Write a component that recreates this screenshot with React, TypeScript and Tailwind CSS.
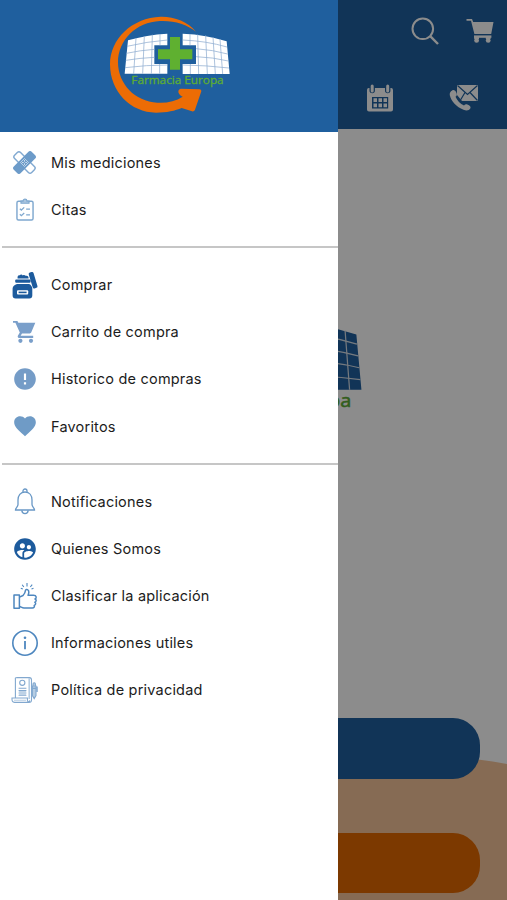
import type { ReactNode } from 'react'
import { MdError, MdFavorite, MdSupervisedUserCircle } from 'react-icons/md'

type Item = { label: string; icon: ReactNode }

// ── Logo ────────────────────────────────────────────────────────────────────
function Logo({ className, panel, line }: { className: string; panel: string; line: string }) {
  return (
    <svg viewBox="0 0 420 360" className={className} fill="none">
      <path
        d="M288 80C264 50 222 34 182 35C96 38 30 102 30 178C30 260 92 323 168 323C200 323 226 317 245 309L276 319Q283 320 285 314L304 259Q305 253 298 253L242 251C232 253 232 268 248 275C226 289 200 295 172 293C104 290 54 236 54 172C54 106 108 51 180 48C222 46 260 58 288 80Z"
        fill="#ec6c05"
      />
      <path d="M84 106Q140 89 202 86V121H163V177H202V206H74Z" fill={panel} />
      <path d="M248 86Q320 89 380 109L389 207H248V177H288V121H248Z" fill={panel} />
      <g stroke={line} strokeWidth="2.2">
        <path d="M108 99L101 206M133 93L128 206M157 89L154 206M180 87V121M179 177V206" />
        <path d="M81 124Q140 110 202 105M79 145Q120 136 163 133M77 166Q120 159 163 157M75 188Q140 180 202 180" />
        <path d="M270 87V121M271 177V207M293 88L296 207M317 91L322 207M339 96L346 207M360 102L368 207" />
        <path d="M248 105Q320 108 381 126M288 131Q340 135 383 147M288 155Q340 157 385 168M248 180Q320 181 387 189" />
      </g>
      <path d="M210 96H240V133H277V163H240V194H210V163H174V133H210Z" fill="#5fb030" />
      <text
        x="94"
        y="238"
        textLength="277"
        lengthAdjust="spacingAndGlyphs"
        fontSize="33"
        fontFamily="'Open Sans', 'Noto Sans', sans-serif"
        fill="#5cab35"
        stroke="#5cab35"
        strokeWidth="1"
      >
        Farmacia Europa
      </text>
    </svg>
  )
}

// ── Top bar icons ───────────────────────────────────────────────────────────
function SearchIcon() {
  return (
    <svg viewBox="0 0 28 28" className="size-7" fill="none" stroke="white" strokeWidth="2">
      <circle cx="11.8" cy="11.8" r="10.3" />
      <path d="M19.2 19.2L27 27" strokeWidth="2.4" />
    </svg>
  )
}

function CartIcon() {
  return (
    <svg viewBox="0 0 28 26" className="h-[26px] w-7" fill="white">
      <path d="M0.5 1H6L7.2 4H27.5L25.2 16H8.4L5 2.8H0.5Z" />
      <path d="M8 17.4H25.4V19.8H8Z" />
      <path d="M8.2 19H13V21H8.2ZM19.8 19H24.6V21H19.8Z" />
      <circle cx="10.6" cy="22.4" r="2.4" />
      <circle cx="22.2" cy="22.4" r="2.4" />
    </svg>
  )
}

function CalendarIcon() {
  return (
    <svg viewBox="0 0 28 28" className="size-7" fill="white">
      <path
        fillRule="evenodd"
        d="M2.8 4H3.5V6.5A2.6 2.6 0 0 0 8.9 6.5V4H19V6.5A2.6 2.6 0 0 0 24.4 6.5V4H25.2A2 2 0 0 1 27 6V25.5A2 2 0 0 1 25 27.5H3A2 2 0 0 1 1 25.5V6A2 2 0 0 1 2.8 4ZM6 13V24.5H22.2V13Z"
      />
      <rect x="4.7" y="0.5" width="3" height="8" rx="1.5" />
      <rect x="20.2" y="0.5" width="3" height="8" rx="1.5" />
      <path d="M7.5 14.3H11V18H7.5ZM12.5 14.3H16V18H12.5ZM17.5 14.3H21V18H17.5ZM7.5 19.5H11V23.2H7.5ZM12.5 19.5H16V23.2H12.5ZM17.5 19.5H21V23.2H17.5Z" />
    </svg>
  )
}

function ContactIcon() {
  return (
    <svg viewBox="0 0 30 28" className="h-7 w-[30px]" fill="white">
      <path d="M8 1H29V17H13L8 11Z" />
      <path d="M8.5 1.5L18.5 10.5L28.5 1.5M11.5 16L16 8.5M28.5 16.5L21 8.5" fill="none" stroke="#1f5f9e" strokeWidth="1.2" />
      <path d="M3.2 6.4C4.8 5.4 6.6 6.8 7.6 9.2C8.3 11 7.5 12 6.5 12.7C8.3 16.8 11.2 19.6 15 21.4C16 20.4 17 19.8 18.4 20.5C20.8 21.4 22.3 23 21.3 24.5C20 26.7 17.3 27 14.5 25.7C7.5 23 2.2 17.4 .8 11.2C.4 9 1.4 7.4 3.2 6.4Z" />
    </svg>
  )
}

// ── Menu icons ──────────────────────────────────────────────────────────────
function BandageIcon() {
  return (
    <svg viewBox="0 0 24 24" className="size-[23px]" fill="none">
      <rect x="-0.6" y="7.6" width="25.2" height="8.8" rx="2.4" transform="rotate(45 12 12)" stroke="#81a9d1" strokeWidth="1.5" />
      <rect x="-1.2" y="7" width="26.4" height="10" rx="2.4" transform="rotate(-45 12 12)" fill="#6c9bc9" />
      <path d="M12 7.8L16.2 12L12 16.2L7.8 12Z" stroke="#c7daec" strokeWidth="0.9" />
      <path d="M12 9.6V11M12 13V14.4M9.6 12H11M13 12H14.4" stroke="#e4eef7" />
    </svg>
  )
}

function ClipboardIcon() {
  return (
    <svg viewBox="0 0 20 24" className="h-[23px] w-5" fill="none" stroke="#7fa8cf" strokeWidth="1.5">
      <rect x="1.6" y="3.4" width="16.8" height="19.6" rx="1.6" />
      <path d="M5.8 5.5V3.2H8A2 2 0 0 1 12 3.2H14.2V5.5Z" fill="#a8c4df" strokeWidth="1.2" />
      <path d="M4.6 11.2L6.2 12.6L9.2 9.8M11.2 11.7H15.2M4.6 17L6.2 18.4L9.2 15.6M11.2 17.5H15.2" strokeWidth="1.3" />
    </svg>
  )
}

function JarIcon() {
  return (
    <svg viewBox="0 0 28 28" className="size-7" fill="#1d5b9d">
      <rect x="4.2" y="8.6" width="15.4" height="3.2" rx="1" />
      <path d="M6.6 7.6C6.4 5.4 6.8 3.8 8.8 4.2C9.6 3.2 11 3.4 11.8 4.4C13 3.6 14 4.2 14.6 4.8C16.6 4.2 17.8 5.4 17.6 7.6Z" />
      <rect x="19.6" y="0.9" width="5" height="16.6" rx="1.6" transform="rotate(-17 22.1 9.2)" />
      <path d="M6 13H18.2C20 14 21.3 15.6 21.3 17.6V24.4A3 3 0 0 1 18.3 27.4H4.6A3 3 0 0 1 1.6 24.4V17.6C1.6 15.6 3.6 13.6 6 13Z" />
      <rect x="6" y="19.2" width="11.2" height="4.4" rx="1" fill="white" />
      <path d="M7.6 20.6H15.6V22.2H7.6Z" />
    </svg>
  )
}

function MenuCartIcon() {
  return (
    <svg viewBox="0 0 24 24" className="size-6" fill="#7a9fca">
      <path d="M0 1H4.4L5.4 2.8H22.3L18.2 12.6Q17.8 13.4 16.8 13.4H9L7.6 15.8H20.2V18H6.2C4.6 18 4.4 16.6 5 15.6L6.8 12.6L2.4 2.8H0Z" />
      <circle cx="7.4" cy="20.8" r="2.1" />
      <circle cx="18" cy="20.8" r="2.1" />
    </svg>
  )
}

function BellIcon() {
  return (
    <svg viewBox="0 0 22 28" className="h-7 w-[22px]" fill="none" stroke="#6998c6" strokeWidth="1.3">
      <path d="M9 4.2V3A2 2 0 0 1 13 3V4.2" />
      <path d="M11 4C6.4 4 4 7.6 4 12V16.5C4 19 1.5 19.6 1.5 22H20.5C20.5 19.6 18 19 18 16.5V12C18 7.6 15.6 4 11 4Z" />
      <path d="M7.8 22.4C8.2 26.6 13.8 26.6 14.2 22.4" />
    </svg>
  )
}

function ThumbIcon() {
  return (
    <svg viewBox="0 0 26 28" className="h-7 w-[26px]" fill="none" stroke="#4e87bf" strokeWidth="1.5" strokeLinejoin="round">
      <path d="M2 13H7.4V26.2H2Z" />
      <path d="M7.5 15.2L11 13.5C12.8 11.6 13.3 10.4 13.5 8.2C14.2 6.6 17 7.5 16.8 10.2C16.8 11.5 16.3 12.4 16 13.3H21.5C24.8 13.3 24.8 16.4 23 17C24.8 17.8 24.4 19.8 22.8 20.2C24.2 21 23.8 23 22.2 23.4C22.9 25 21.8 26 20.4 26H12C10.2 26 9.2 25 7.5 24.5" />
      <path d="M15 1V4.4M10.2 2.7L11.8 5M20.2 2.7L18.3 5M8.8 6.2L10.8 7M21.5 6.2L19.5 7" strokeWidth="1.1" />
    </svg>
  )
}

function InfoIcon() {
  return (
    <svg viewBox="0 0 28 28" className="size-7" fill="none" stroke="#4e87bf" strokeWidth="1.6">
      <circle cx="14" cy="14" r="12.2" />
      <path d="M14 12V20.3" strokeWidth="1.8" />
      <circle cx="14" cy="8.8" r="1.3" fill="#4e87bf" stroke="none" />
    </svg>
  )
}

function PolicyIcon() {
  return (
    <svg viewBox="0 0 28 28" className="mr-0.5 size-7" fill="none" stroke="#82a8cf" strokeWidth="1.1">
      <path d="M5.4 21.6V3.6C5.4 2 4.8 1.6 7 1.6H19.4C21 1.6 21.5 2.4 21.5 4V24C21.5 26 20.8 26.4 19 26.4H4.6C2.4 26.4 1.8 25 2 22H17.4V24.2C17.6 26 19.4 26.4 19.6 24.4" />
      <path d="M19.2 2V23" stroke="#b6cde3" strokeWidth="1.6" />
      <circle cx="12.3" cy="6.8" r="2.6" />
      <path d="M8.6 12.2H16.4M8.6 14.6H16.4M8.6 17H16.4M8.6 19.3H16.4" />
      <path d="M9 15.8H16M9 18.2H16M4 24.2H16" stroke="#b6cde3" />
      <path d="M23 9.8V8A1.2 1.2 0 0 1 25.4 8V9.8M22.4 10H26V19.5L24.2 22.6L22.4 19.5ZM22.4 12.4H26M26 11H27.2V16" fill="#b6cde3" />
    </svg>
  )
}

const sections: Item[][] = [
  [
    { label: 'Mis mediciones', icon: <BandageIcon /> },
    { label: 'Citas', icon: <ClipboardIcon /> },
  ],
  [
    { label: 'Comprar', icon: <JarIcon /> },
    { label: 'Carrito de compra', icon: <MenuCartIcon /> },
    { label: 'Historico de compras', icon: <MdError className="size-[26px] text-[#759cc7]" /> },
    { label: 'Favoritos', icon: <MdFavorite className="size-[26px] text-[#6f9bc6]" /> },
  ],
  [
    { label: 'Notificaciones', icon: <BellIcon /> },
    { label: 'Quienes Somos', icon: <MdSupervisedUserCircle className="size-[26px] text-[#1d5b9d]" /> },
    { label: 'Clasificar la aplicación', icon: <ThumbIcon /> },
    { label: 'Informaciones utiles', icon: <InfoIcon /> },
    { label: 'Política de privacidad', icon: <PolicyIcon /> },
  ],
]

function HomeScreen() {
  return (
    <div className="flex h-full flex-col bg-white">
      <header className="flex h-[129px] shrink-0 flex-col bg-[#1f5f9e]">
        <div className="flex h-[62px] items-center justify-end gap-[27px] pr-[13px]">
          <SearchIcon />
          <CartIcon />
        </div>
        <div className="flex h-[67px] items-center justify-end pt-1 pr-px">
          <div className="flex w-[85px] justify-center">
            <CalendarIcon />
          </div>
          <div className="flex w-[84px] justify-center">
            <ContactIcon />
          </div>
        </div>
      </header>

      <main className="relative flex flex-1 flex-col">
        <svg viewBox="0 0 507 150" className="absolute bottom-0 left-0 h-[150px] w-full">
          <path d="M0 14C160 -6 360 -12 507 14V150H0Z" fill="#f5c499" />
        </svg>
        <Logo className="relative mt-36 ml-[142px] h-[203px] w-[237px]" panel="#1f5f9e" line="#d5dde6" />
        <div className="relative mt-auto flex flex-col gap-[54px] px-[27px] pb-[7px]">
          <div className="h-[61px] rounded-[27px] bg-[#1f5f9e]" />
          <div className="h-[60px] rounded-[27px] bg-[#e26800]" />
        </div>
      </main>
    </div>
  )
}

function Drawer() {
  return (
    <aside className="absolute inset-y-0 left-0 flex w-[338px] flex-col bg-white">
      <div className="flex h-[132px] shrink-0 justify-center bg-[#1f5f9e] pt-[5px] pl-0.5">
        <Logo className="h-[120px] w-[140px]" panel="white" line="#8fadd0" />
      </div>
      <nav className="flex flex-col pt-[7px]">
        {sections.map((items, i) => (
          <div key={i}>
            {i > 0 && (
              <div className="flex h-[28.4px] items-center pl-0.5">
                <div className="h-0.5 w-full bg-[#c6c6c6]" />
              </div>
            )}
            {items.map((item) => (
              <div key={item.label} className="flex h-[47.1px] items-center">
                <div className="flex w-[49px] justify-center">{item.icon}</div>
                <span className="pl-0.5 font-['Inter',sans-serif] text-[14.5px] tracking-[0.2px] text-[#1c1c1c]">
                  {item.label}
                </span>
              </div>
            ))}
          </div>
        ))}
      </nav>
    </aside>
  )
}

export default function App() {
  return (
    <div className="relative h-[900px] w-[507px] overflow-hidden">
      <HomeScreen />
      <div className="absolute inset-0 bg-black/45" />
      <Drawer />
    </div>
  )
}
